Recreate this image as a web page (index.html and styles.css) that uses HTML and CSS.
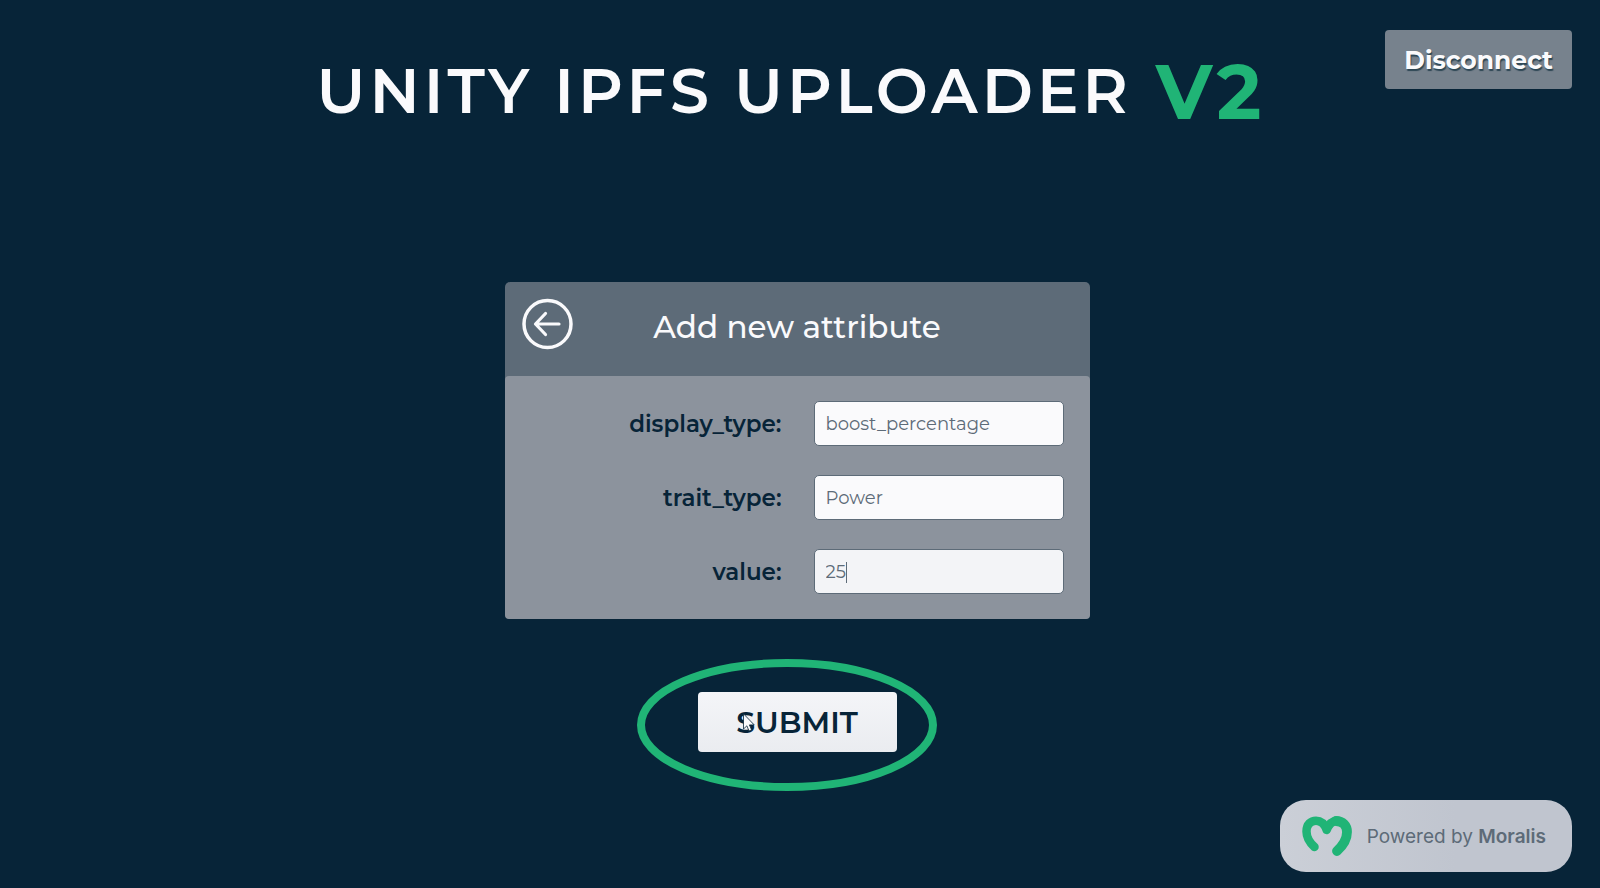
FILE: index.html
```html
<!DOCTYPE html>
<html lang="en">
<head>
<meta charset="utf-8">
<meta name="viewport" content="width=device-width, initial-scale=1">
<title>Unity IPFS Uploader V2</title>
<link rel="stylesheet" href="styles.css">
</head>
<body>
<div class="page">
  <header class="topbar">
    <h1 class="title"><span class="title-name">UNITY IPFS UPLOADER</span> <span class="title-version">V2</span></h1>
    <button class="disconnect" type="button">Disconnect</button>
  </header>
  <main class="main">
    <form class="form">
      <section class="panel">
        <div class="panel-head">
          <button class="back" type="button" aria-label="Back">
            <svg viewBox="0 0 52 52" fill="none" stroke="#fafafc" stroke-linecap="round" stroke-linejoin="round">
              <circle cx="26.500" cy="26" r="23.500" stroke-width="3.500"/>
              <path d="M38 26H14.500M24.500 15.500L14.500 26l10 10.500" stroke-width="3.200"/>
            </svg>
          </button>
          <h2 class="panel-title">Add new attribute</h2>
        </div>
        <div class="fields">
          <label class="label" for="display">display_type:</label>
          <input class="input" id="display" type="text" value="boost_percentage">
          <label class="label" for="trait">trait_type:</label>
          <input class="input" id="trait" type="text" value="Power">
          <label class="label" for="value">value:</label>
          <div class="field-active">
            <input class="input input-active" id="value" type="text" value="25">
            <span class="caret"></span>
          </div>
        </div>
      </section>
      <div class="submit-area">
        <button class="submit" type="button">SUBMIT</button>
        <svg class="ring" viewBox="0 0 300 132" fill="none"><ellipse cx="150" cy="66" rx="146" ry="62" stroke="#20b476" stroke-width="8"/></svg>
        <svg class="pointer" viewBox="0 0 12 19"><path d="M.5.800V16l3.400-3.200L6 18l2.600-1.100-2.200-5h4.800z" fill="#fafafc" stroke="#072438" stroke-width=".8"/></svg>
      </div>
    </form>
  </main>
  <footer class="footer">
    <div class="badge">
      <svg class="logo" viewBox="0 0 50 40" fill="none" stroke="#20b476" stroke-linecap="round" stroke-linejoin="round">
        <path d="M12.500 31C7.500 26.500 4.500 22 4.500 15.500 4.500 8 9 4.700 14 4.700c5.500 0 8.500 3 10.700 9.300C27 8 30 4.700 35 4.700" stroke-width="8.500"/>
        <path d="M34 5c6.500 0 11 4.500 11 11 0 8-4 13.500-10 19" stroke-width="9.800"/>
      </svg>
      <span>Powered by <b>Moralis</b></span>
    </div>
  </footer>
</div>
</body>
</html>
```
FILE: styles.css
```css
* { box-sizing: border-box; }
body {
  margin: 0;
  background: #072438;
  font-family: Montserrat, Inter, "Liberation Sans", sans-serif;
}
button, input { font: inherit; }
.page {
  min-height: 100vh;
  padding: 30px 28px 16px 22px;
  display: flex;
  flex-direction: column;
}
.topbar {
  display: grid;
  grid-template-columns: 1fr auto 1fr;
  align-items: start;
}
.title {
  grid-column: 2;
  margin: 0;
  height: 122px;
  padding-right: 12px;
  display: flex;
  align-items: center;
  gap: 24px;
  color: #fafafc;
  white-space: nowrap;
}
.title-name { font-size: 62px; font-weight: 600; letter-spacing: 4px; }
.title-version { color: #20b476; font-size: 76px; font-weight: 700; letter-spacing: 4px; }
.disconnect {
  justify-self: end;
  height: 59px;
  padding: 0 19px;
  border: 0;
  border-radius: 4px;
  background: #77828d;
  color: #fafafc;
  font-size: 25px;
  font-weight: 700;
  text-shadow: 1px 2px 1px #2d4654;
}
.main { display: flex; justify-content: center; padding-top: 130px; }
.form { display: flex; flex-direction: column; align-items: center; }
.panel {
  width: 585px;
  max-width: 100%;
  border-radius: 5px;
  background: #5d6b78;
}
.panel-head {
  position: relative;
  height: 94px;
  padding-bottom: 4px;
  display: flex;
  align-items: center;
  justify-content: center;
}
.back {
  position: absolute;
  left: 16px;
  top: 16px;
  width: 52px;
  height: 52px;
  padding: 0;
  border: 0;
  background: none;
}
.back svg { display: block; }
.panel-title { margin: 0; color: #fafafc; font-size: 31px; font-weight: 500; }
.fields {
  display: grid;
  grid-template-columns: 1fr 250px;
  align-items: center;
  gap: 29px 32px;
  padding: 25px 26px 25px 24px;
  border-radius: 4px;
  background: #8c939d;
}
.label { text-align: right; color: #072438; font-size: 23px; font-weight: 600; }
.input {
  display: block;
  width: 100%;
  height: 45px;
  padding: 0 11px;
  border: 1px solid #5d6b78;
  border-radius: 5px;
  background: #fafafc;
  color: #5d6b78;
  font-size: 18px;
}
.input-active { background: #f3f4f7; }
.field-active { position: relative; }
.caret { position: absolute; left: 32px; top: 13px; width: 1px; height: 21px; background: #5d6b78; }
.submit-area { position: relative; margin-top: 73px; }
.submit {
  display: block;
  width: 199px;
  height: 60px;
  border: 0;
  border-radius: 4px;
  background: linear-gradient(#f4f5f8, #eaecf0);
  color: #072438;
  font-size: 30px;
  font-weight: 600;
}
.ring { position: absolute; left: -61px; top: -33px; width: 300px; height: 132px; pointer-events: none; }
.pointer { position: absolute; left: 45px; top: 21px; width: 12px; height: 19px; pointer-events: none; }
.footer { margin-top: auto; display: flex; justify-content: flex-end; }
.badge {
  height: 72px;
  padding: 0 26px 0 22px;
  display: flex;
  align-items: center;
  gap: 15px;
  border-radius: 26px;
  background: linear-gradient(90deg, #cbcfd7, #c0c5cf 60%);
  color: #5d6b78;
  font-family: Inter, sans-serif;
  font-size: 19px;
}
.badge b { font-weight: 600; }
.logo { width: 50px; height: 40px; }
```
